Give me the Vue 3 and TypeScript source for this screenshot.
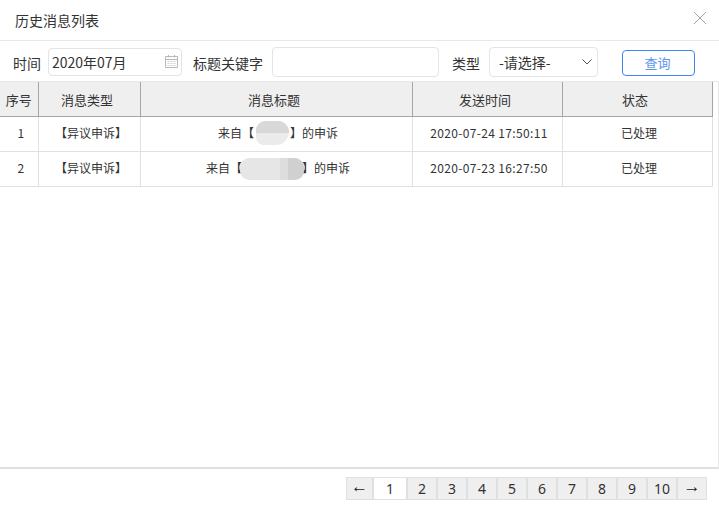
<script setup lang="ts">
interface Row { id: number; type: string; time: string; status: string; pre: string; post: string; blur: string }
const rows: Row[] = [
  { id: 1, type: '【异议申诉】', time: '2020-07-24 17:50:11', status: '已处理', pre: '来自【', post: '】的申诉', blur: 'short' },
  { id: 2, type: '【异议申诉】', time: '2020-07-23 16:27:50', status: '已处理', pre: '来自【', post: '】的申诉', blur: 'long' },
]
const pages = [1, 2, 3, 4, 5, 6, 7, 8, 9, 10]
</script>

<template>
  <div class="dialog">
    <header class="title-bar">
      <span class="title">历史消息列表</span>
      <svg class="close" width="14" height="14" viewBox="0 0 14 14"><path d="M1 1L13 13M13 1L1 13" stroke="#a0a0a0" stroke-width="1" fill="none" /></svg>
    </header>
    <div class="toolbar">
      <label class="lbl lbl-time">时间</label>
      <div class="field date">
        <span>2020年07月</span>
        <svg width="13" height="13" viewBox="0 0 13 13" class="cal"><path d="M0.5 1.5H12.5V12.5H0.5ZM0.5 4.5H12.5M3.5 0V2.5M9.5 0V2.5" stroke="#b8b8b8" fill="none" /><path d="M2.5 6.5h2M5.5 6.5h2M8.5 6.5h2M2.5 8.5h2M5.5 8.5h2M8.5 8.5h2M2.5 10.5h2M5.5 10.5h2M8.5 10.5h2" stroke="#d2d2d2" /></svg>
      </div>
      <label class="lbl lbl-key">标题关键字</label>
      <div class="field keyword"></div>
      <label class="lbl lbl-type">类型</label>
      <div class="field select">
        <span>-请选择-</span>
        <svg width="10" height="6" viewBox="0 0 10 6"><path d="M0.5 0.5L5 5L9.5 0.5" stroke="#555" fill="none" /></svg>
      </div>
      <button class="query">查询</button>
    </div>
    <div class="content">
      <table class="grid">
        <colgroup><col class="c1" /><col class="c2" /><col class="c3" /><col class="c4" /><col class="c5" /></colgroup>
        <thead><tr><th>序号</th><th>消息类型</th><th>消息标题</th><th>发送时间</th><th>状态</th></tr></thead>
        <tbody>
          <tr v-for="r in rows" :key="r.id">
            <td>{{ r.id }}</td>
            <td>{{ r.type }}</td>
            <td>
              <span class="subject">{{ r.pre }}<span :class="['redact', r.blur]"></span>{{ r.post }}</span>
            </td>
            <td class="time">{{ r.time }}</td>
            <td>{{ r.status }}</td>
          </tr>
        </tbody>
      </table>
    </div>
    <footer class="pager">
      <span class="pg arrow first">←</span>
      <span v-for="p in pages" :key="p" :class="['pg', { on: p === 1 }]">{{ p }}</span>
      <span class="pg arrow">→</span>
    </footer>
  </div>
</template>

<style>
html, body { margin: 0; background: #fff; }
</style>

<style scoped>
.dialog {
  width: 719px; height: 508px; background: #fff; overflow: hidden;
  font-family: "Noto Sans CJK SC", "Liberation Sans", sans-serif; color: #333;
  display: flex; flex-direction: column;
}
.title-bar {
  height: 40px; border-bottom: 1px solid #e8e8e8; box-sizing: content-box;
  display: flex; align-items: center; justify-content: space-between; padding: 0 12px 0 15px;
}
.title { font-size: 14px; }
.close { margin-top: -4px; }
.toolbar { height: 40px; box-sizing: border-box; padding-top: 2px; display: flex; align-items: center; font-size: 14px; }
.lbl { white-space: nowrap; padding-top: 2px; }
.lbl-time { margin-left: 13px; width: 35px; }
.lbl-key { margin-left: 11px; width: 79px; }
.lbl-type { margin-left: 13px; width: 37px; }
.field {
  box-sizing: border-box; border: 1px solid #e4e4e4; border-radius: 4px; height: 28px; background: #fff;
  display: flex; align-items: center; justify-content: space-between;
}
.date { width: 134px; padding: 0 3px 0 3px; }
.keyword { width: 167px; height: 30px; }
.select { width: 109px; height: 30px; padding: 0 5px 0 9px; }
.cal { margin-top: -2px; }
.query {
  box-sizing: border-box; width: 73px; height: 26px; margin: 2px 0 0 24px; border: 1px solid #3d86f4; border-radius: 4px;
  background: #fff; color: #5b96ec; font: inherit; font-size: 13px; padding: 0 2px 2px 0;
}
.content { flex: 1; border-top: 1px solid #e8e8e8; border-right: 1px solid #e8e8e8; border-bottom: 2px solid #e0e0e0; min-height: 0; }
.grid { border-collapse: collapse; table-layout: fixed; width: 712px; font-size: 12px; }
.c1 { width: 38px; } .c2 { width: 102px; } .c3 { width: 272px; } .c4 { width: 150px; } .c5 { width: 150px; }
th {
  height: 34px; background: #efefef; font-weight: 400; font-size: 13px; padding: 0 4px 0 0;
  border-right: 1px solid #a6a6a6; border-bottom: 1px solid #a6a6a6;
}
th:first-child { padding: 0; }
td { height: 32px; line-height: 16px; text-align: center; padding: 0 0 2px 4px; border-right: 1px solid #e0e0e0; border-bottom: 1px solid #e0e0e0; }
.time { letter-spacing: 0.35px; }
.subject { display: inline-flex; align-items: center; }
.redact { display: inline-block; position: relative; }
.redact.short { width: 36px; height: 12px; }
.redact.long { width: 60px; height: 12px; }
.redact::after { content: ""; position: absolute; }
.redact.short::after {
  left: 2px; top: -6px; width: 33px; height: 24px; border-radius: 10px 12px 14px 8px;
  background: linear-gradient(#d8d8d8 0 52%, #ebebeb 52%);
}
.redact.long::after {
  left: -2px; top: -4px; width: 64px; height: 22px; border-radius: 9px;
  background: linear-gradient(90deg, #e6e6e6 0 62%, #dddddd 62% 75%, #d0d0d0 75%);
}
.pager { height: 39px; display: flex; justify-content: flex-end; align-items: flex-start; padding: 8px 12px 0 0; box-sizing: border-box; }
.pg {
  box-sizing: border-box; width: 30px; height: 23px; background: #efefef; border: 1px solid #e0e0e0; padding-bottom: 1px;
  display: flex; align-items: center; justify-content: center; font-size: 14px; color: #333; font-family: "Noto Sans", sans-serif;
}
.pg.on { background: #fff; width: 34px; }
.pg.first { width: 27px; }
.arrow { font-family: "Liberation Sans", sans-serif; font-size: 17px; color: #222; padding-bottom: 3px; }
</style>
